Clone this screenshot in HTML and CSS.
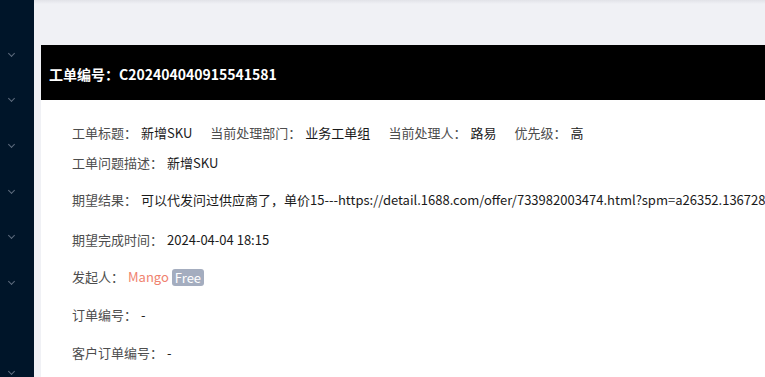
FILE: index.html
```html
<!DOCTYPE html>
<html lang="zh">
<head>
<meta charset="utf-8">
<title>工单详情</title>
<link rel="stylesheet" href="styles.css">
</head>
<body>
<div class="layout">
  <aside class="sider">
    <div class="menu-item"><span class="chev"></span></div>
    <div class="menu-item"><span class="chev"></span></div>
    <div class="menu-item"><span class="chev"></span></div>
    <div class="menu-item"><span class="chev"></span></div>
    <div class="menu-item"><span class="chev"></span></div>
    <div class="menu-item"><span class="chev"></span></div>
    <div class="menu-item"></div>
    <div class="menu-end"><span class="chev"></span></div>
  </aside>
  <main class="main">
    <div class="topbar"></div>
    <section class="card">
      <header class="card-head">工单编号：C202404040915541581</header>
      <div class="card-body">
        <div class="row r1">
          <span class="item"><span class="label">工单标题：</span><span class="value">新增SKU</span></span>
          <span class="item"><span class="label">当前处理部门：</span><span class="value">业务工单组</span></span>
          <span class="item"><span class="label">当前处理人：</span><span class="value">路易</span></span>
          <span class="item"><span class="label">优先级：</span><span class="value">高</span></span>
        </div>
        <div class="row r2">
          <span class="label">工单问题描述：</span><span class="value">新增SKU</span>
        </div>
        <div class="row r3">
          <span class="label">期望结果：</span><span class="value">可以代发问过供应商了，单价15---https://detail.1688.com/offer/733982003474.html?spm=a26352.1367286</span>
        </div>
        <div class="row r4">
          <span class="label">期望完成时间：</span><span class="value">2024-04-04 18:15</span>
        </div>
        <div class="row r5">
          <span class="label">发起人：</span><span class="user">Mango</span><span class="tag">Free</span>
        </div>
        <div class="row r6">
          <span class="label">订单编号：</span><span class="value">-</span>
        </div>
        <div class="row">
          <span class="label">客户订单编号：</span><span class="value">-</span>
        </div>
      </div>
    </section>
  </main>
</div>
</body>
</html>
```

FILE: styles.css
```css
* { box-sizing: border-box; }
html, body {
  margin: 0;
  padding: 0;
  width: 765px;
  height: 377px;
  overflow: hidden;
}
body {
  font-family: "Noto Sans CJK SC", "Noto Sans", sans-serif;
  font-size: 13px;
  color: #262626;
  background: #f0f1f5;
}
.layout {
  display: flex;
  height: 377px;
}
.sider {
  width: 34px;
  height: 377px;
  flex: none;
  background: #001529;
  display: flex;
  flex-direction: column;
  padding-top: 32px;
  overflow: hidden;
}
.menu-item {
  height: 45.6px;
  flex: none;
  display: flex;
  align-items: center;
  padding-left: 9px;
}
.menu-end {
  flex: 1;
  display: flex;
  align-items: flex-end;
  padding: 0 0 3px 9px;
}
.chev {
  display: block;
  width: 5px;
  height: 5px;
  margin-top: -3px;
  border-right: 1.4px solid #5c6b7d;
  border-bottom: 1.4px solid #5c6b7d;
  transform: rotate(45deg);
}
.main {
  flex: 1;
  min-width: 0;
  display: flex;
  flex-direction: column;
  padding-left: 7px;
  background: linear-gradient(#e2e3e8, #f0f1f5 4px);
}
.topbar {
  height: 45px;
  flex: none;
}
.card {
  flex: 1;
  background: #fff;
  overflow: hidden;
}
.card-head {
  height: 55px;
  background: #000;
  color: #fff;
  font-weight: bold;
  font-size: 14px;
  display: flex;
  align-items: center;
  padding-left: 8px;
  padding-top: 2px;
  white-space: nowrap;
}
.card-body {
  padding: 23px 0 0 31px;
  display: flex;
  flex-direction: column;
  white-space: nowrap;
}
.row {
  height: 20px;
  display: flex;
  align-items: center;
  line-height: 20px;
  flex: none;
}
.r1 { margin-bottom: 10px; }
.r2 { margin-bottom: 17px; }
.r3 { margin-bottom: 20px; }
.r4 { margin-bottom: 17px; }
.r5 { margin-bottom: 18px; }
.r6 { margin-bottom: 18px; }
.item { margin-right: 18px; display: inline-flex; }
.label { color: #4d4d4d; margin-right: 4px; }
.value { color: #1a1a1a; }
.user { color: #f0826e; }
.tag {
  margin-left: 3px;
  background: #a4adbf;
  color: #fff;
  border-radius: 3px;
  padding: 0 3px;
  line-height: 17px;
  height: 17px;
}
```
